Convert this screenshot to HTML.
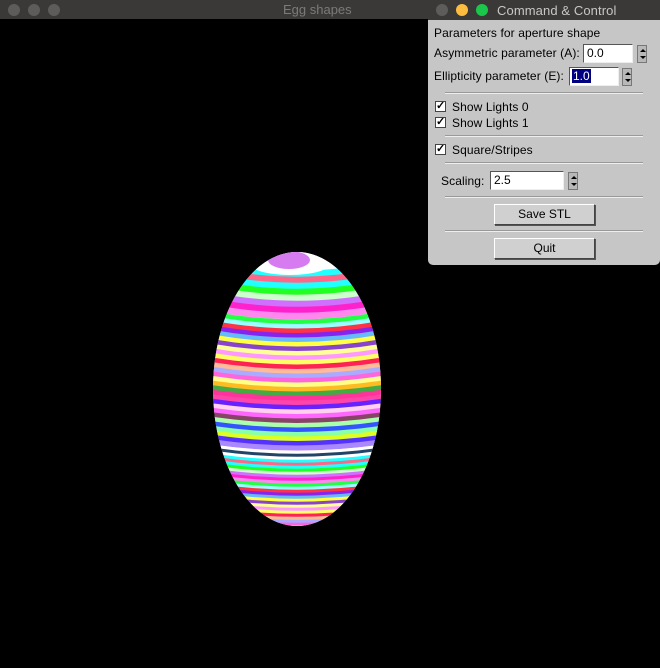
<!DOCTYPE html>
<html><head><meta charset="utf-8"><style>
*{margin:0;padding:0;box-sizing:border-box}
body{width:660px;height:668px;background:#000;position:relative;overflow:hidden;font-family:"Liberation Sans",sans-serif}
.tb{position:absolute;left:0;top:0;width:660px;height:19px;background:#3b3937}
.dot{position:absolute;width:12px;height:12px;border-radius:50%;top:4px}
.ttl{position:absolute;top:2px;font-size:13px;color:#7c7a78}
#panel{position:absolute;left:428px;top:0;width:232px;height:265px;background:#c6c6c6;border-radius:0 0 5px 5px;overflow:hidden}
#panel .pt{position:absolute;left:0;top:0;width:232px;height:20px;background:#3b3937}
.t{position:absolute;font-size:12px;color:#000;white-space:nowrap;letter-spacing:0.1px}
.in{position:absolute;background:#fff;border:1px solid #555;border-right-color:#eee;border-bottom-color:#eee;font-size:12px;padding:1px 0 0 3px}
.sp{position:absolute;width:10px;height:18px;background:#b8b8b8;border:1px solid #777}
.sp:before{content:"";position:absolute;left:2px;top:3px;border:3px solid transparent;border-bottom:3px solid #000;border-top:0}
.sp:after{content:"";position:absolute;left:2px;top:10px;border:3px solid transparent;border-top:3px solid #000;border-bottom:0}
.sep{position:absolute;left:17px;width:198px;height:2px;border-top:1px solid #999;border-bottom:1px solid #eee}
.cb{position:absolute;left:7px;width:11px;height:11px;background:#fff;border:1px solid #444;font-size:11px;line-height:9px;text-align:center;font-weight:bold}
.btn{position:absolute;left:66px;width:101px;height:21px;background:#d0d0d0;border:1px solid #444;border-top-color:#fff;border-left-color:#fff;font-size:12px;text-align:center;line-height:19px;box-shadow:1px 1px 0 #555}
</style></head><body>
<div class="tb"></div>
<div class="dot" style="left:8px;background:#5e5c5a"></div>
<div class="dot" style="left:28px;background:#5e5c5a"></div>
<div class="dot" style="left:48px;background:#5e5c5a"></div>
<div class="ttl" style="left:283px">Egg shapes</div>
<svg width="660" height="668" style="position:absolute;left:0;top:0">
<defs><clipPath id="egg"><ellipse cx="297" cy="389" rx="84" ry="137"/></clipPath></defs>
<g clip-path="url(#egg)" id="stripes"><rect x="200" y="240" width="200" height="300" fill="#ffe0f8"/></g>
<g clip-path="url(#egg)">
<ellipse cx="290" cy="262" rx="42" ry="13" fill="#fff"/>
<ellipse cx="289" cy="260" rx="21" ry="9" fill="#d77cf0"/>
</g>
</svg>
<div id="panel">
<div class="pt"></div>
<div class="dot" style="left:8px;background:#5e5c5a"></div>
<div class="dot" style="left:28px;background:#fdbc40"></div>
<div class="dot" style="left:48px;background:#1ac74a"></div>
<div class="t" style="left:69px;top:3px;color:#c9c7c5;font-size:13px">Command &amp; Control</div>
<div class="t" style="left:6px;top:26px">Parameters for aperture shape</div>
<div class="t" style="left:6px;top:46px">Asymmetric parameter (A):</div>
<div class="in" style="left:155px;top:44px;width:50px;height:19px">0.0</div>
<div class="sp" style="left:209px;top:45px"></div>
<div class="t" style="left:6px;top:69px">Ellipticity parameter (E):</div>
<div class="in" style="left:141px;top:67px;width:50px;height:19px;padding-left:2px"><span style="background:#000080;color:#fff;padding:0 1px">1.0</span></div>
<div class="sp" style="left:194px;top:68px"></div>
<div class="sep" style="top:92px"></div>
<div class="cb" style="top:101px">✓</div><div class="t" style="left:24px;top:100px">Show Lights 0</div>
<div class="cb" style="top:117px">✓</div><div class="t" style="left:24px;top:116px">Show Lights 1</div>
<div class="sep" style="top:135px"></div>
<div class="cb" style="top:144px">✓</div><div class="t" style="left:24px;top:143px">Square/Stripes</div>
<div class="sep" style="top:162px"></div>
<div class="t" style="left:13px;top:174px">Scaling:</div>
<div class="in" style="left:62px;top:171px;width:74px;height:19px">2.5</div>
<div class="sp" style="left:140px;top:172px"></div>
<div class="sep" style="top:196px"></div>
<div class="btn" style="top:204px">Save STL</div>
<div class="sep" style="top:230px"></div>
<div class="btn" style="top:238px">Quit</div>
</div>
<script>
var cols=["#ffffff","#ffff88","#d070ff","#ffd0f0","#8822ee","#ddff22","#ffff66","#22ffff","#ffbb22","#ff22cc","#ff66ff","#66bbff","#5533ff","#ff2255","#ff6688","#44aa44","#ff88ee","#884466","#ffff44","#aa88ff","#ffbb99","#22ffff","#ff3399","#22ff44","#aaffaa","#8844cc","#ffffff","#aaaaff","#22ff22","#ff44aa","#99ffff","#3355ff","#ffff99","#224466","#ff66dd","#ccffcc","#6622ff","#ff3344","#88ffaa","#ff99ff"];
var g=document.getElementById("stripes"),ns="http://www.w3.org/2000/svg",y=268,i=0;
while(y<530){var w=y<320?6:(y<450?4.5:3);var p=document.createElementNS(ns,"path");var b=y<400?12-(y-268)*0.03:8;
p.setAttribute("d","M200 "+(y-b)+" Q297 "+(y+b)+" 394 "+(y-b));p.setAttribute("stroke",cols[i%cols.length]);p.setAttribute("stroke-width",w+0.6);p.setAttribute("fill","none");g.appendChild(p);y+=w;i+=7;}
</script>
</body></html>
